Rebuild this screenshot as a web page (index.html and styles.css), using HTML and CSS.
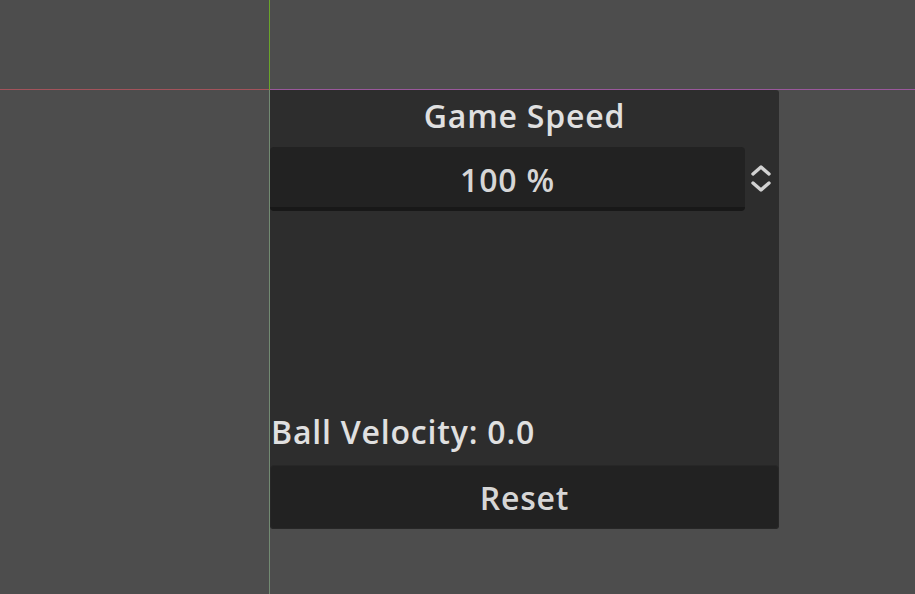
FILE: index.html
```html
<!DOCTYPE html>
<html>
<head>
<meta charset="utf-8">
<link rel="stylesheet" href="styles.css">
</head>
<body>
<div class="axis axis-x-neg"></div>
<div class="axis axis-x-pos"></div>
<div class="axis axis-y-neg"></div>
<div class="axis axis-y-pos"></div>
<div class="canvas">
  <div class="panel">
    <div class="title">Game Speed</div>
    <div class="spin">
      <div class="spin-field">100 %</div>
      <div class="spin-arrows">
        <svg width="24" height="32" viewBox="0 0 24 32">
          <path d="M4 11 L12 4 L20 11" fill="none" stroke="#d2d2d2" stroke-width="3.4" stroke-linecap="round" stroke-linejoin="round"/>
          <path d="M4 20 L12 27 L20 20" fill="none" stroke="#d2d2d2" stroke-width="3.4" stroke-linecap="round" stroke-linejoin="round"/>
        </svg>
      </div>
    </div>
    <div class="spacer"></div>
    <div class="velocity">Ball Velocity: 0.0</div>
    <div class="reset">Reset</div>
  </div>
</div>
</body>
</html>
```
FILE: styles.css
```css
html, body {
  margin: 0;
  padding: 0;
  width: 915px;
  height: 594px;
  overflow: hidden;
  background: #4d4d4d;
  font-family: "Open Sans", "Noto Sans", sans-serif;
  font-weight: 600;
  color: #e0e0e0;
  letter-spacing: 0.8px;
}
.axis {
  position: absolute;
}
.axis-x-neg {
  left: 0;
  top: 89px;
  width: 269px;
  height: 1px;
  background: #a3535b;
}
.axis-x-pos {
  left: 270px;
  top: 89px;
  right: 0;
  height: 1px;
  background: #9a589c;
}
.axis-y-neg {
  left: 269px;
  top: 0;
  width: 1px;
  height: 90px;
  background: #6aa52a;
}
.axis-y-pos {
  left: 269px;
  top: 90px;
  width: 1px;
  bottom: 0;
  background: #728a72;
}
.canvas {
  padding: 90px 0 0 270px;
}
.panel {
  width: 509px;
  height: 439px;
  background: #2d2d2d;
  border-radius: 0 3px 3px 3px;
  display: flex;
  flex-direction: column;
}
.title {
  height: 57px;
  display: flex;
  align-items: center;
  justify-content: center;
  font-size: 32px;
  line-height: 1;
  padding-bottom: 5px;
  box-sizing: border-box;
}
.spin {
  display: flex;
  height: 64px;
}
.spin-field {
  width: 475px;
  height: 64px;
  box-sizing: border-box;
  background: #222222;
  border-radius: 4px;
  border-bottom: 4px solid #181818;
  display: flex;
  align-items: center;
  justify-content: center;
  font-size: 32px;
  color: #d6d6d6;
  padding-top: 4px;
}
.spin-arrows {
  flex: 1;
  display: flex;
  align-items: center;
  justify-content: center;
  padding-right: 2px;
}
.spacer {
  flex: 1;
}
.velocity {
  font-size: 32px;
  line-height: 1;
  height: 42px;
  display: flex;
  align-items: center;
  padding-left: 1px;
  margin-bottom: 12px;
}
.reset {
  height: 64px;
  box-sizing: border-box;
  background: #222222;
  border: 1px solid #272727;
  border-radius: 4px;
  display: flex;
  align-items: center;
  justify-content: center;
  font-size: 32px;
  color: #d6d6d6;
}
```
